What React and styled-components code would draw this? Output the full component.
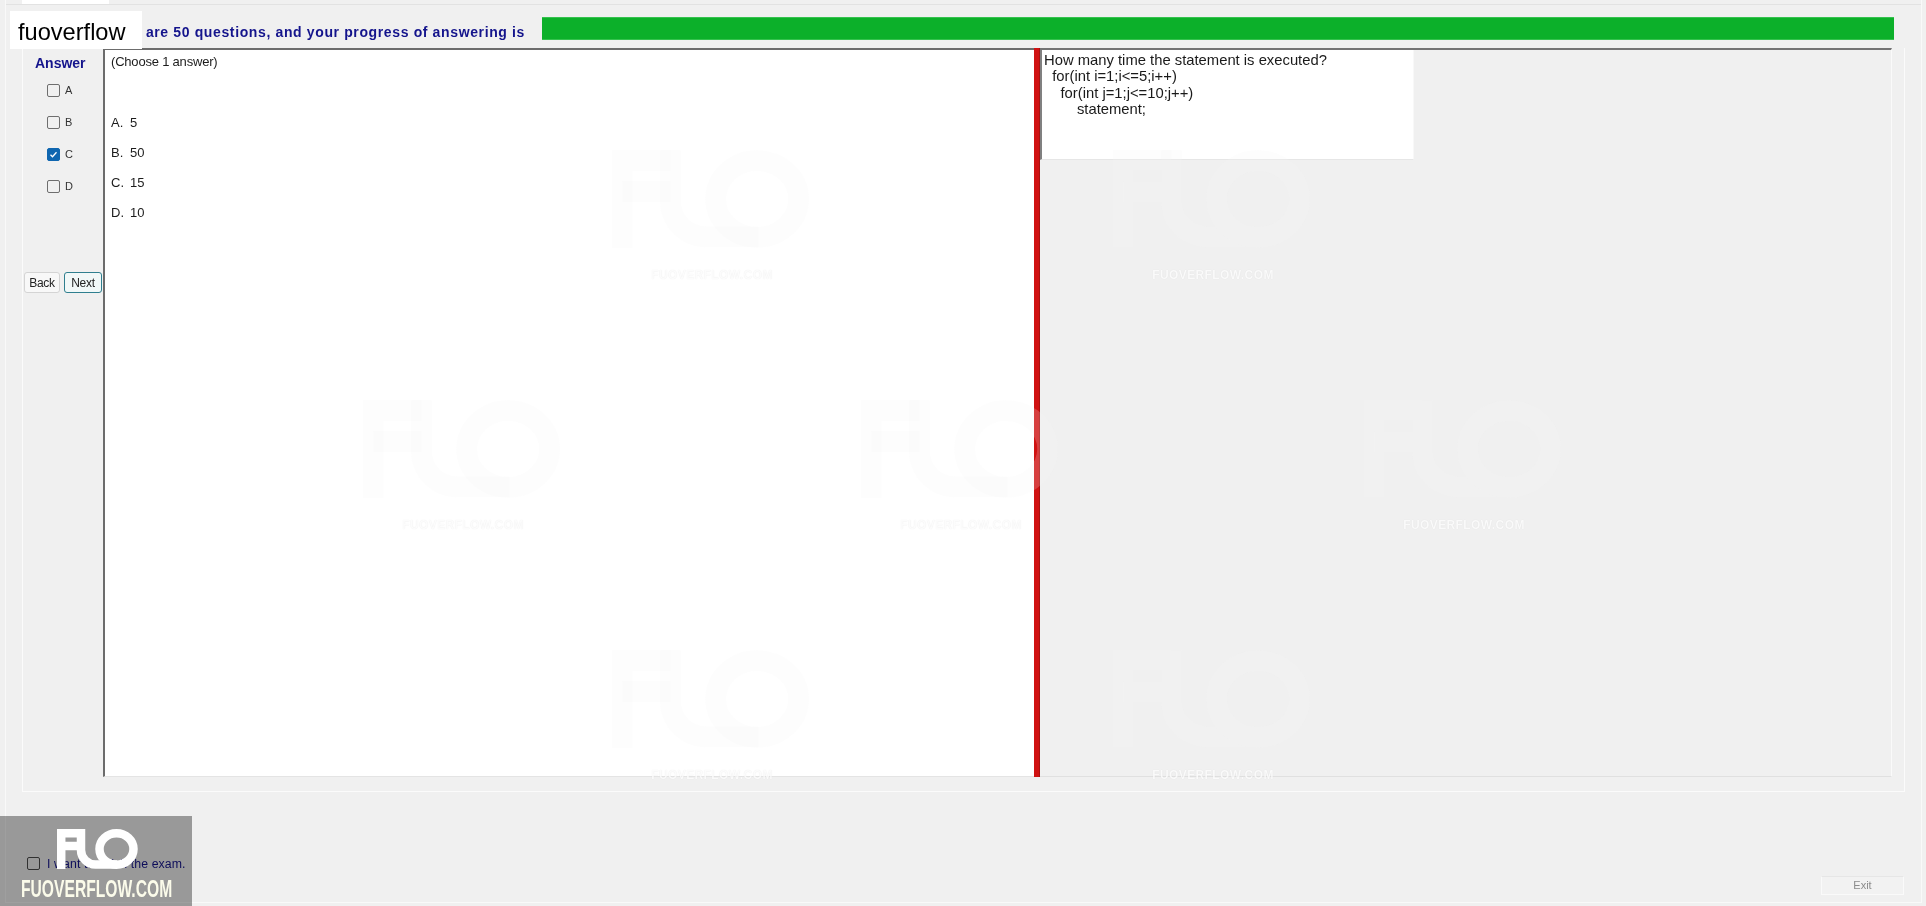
import React from "react";
import styled, { createGlobalStyle } from "styled-components";

const answers = [
  { key: "A", value: "5" },
  { key: "B", value: "50" },
  { key: "C", value: "15", checked: true },
  { key: "D", value: "10" },
];

const marks = [
  { x: 612, y: 150 },
  { x: 1113, y: 150 },
  { x: 363, y: 400 },
  { x: 861, y: 400 },
  { x: 1364, y: 400 },
  { x: 612, y: 650 },
  { x: 1113, y: 650 },
];

const question = `How many time the statement is executed?
  for(int i=1;i<=5;i++)
    for(int j=1;j<=10;j++)
        statement;`;

const FuoLogo = ({ color = "#fff", width = 82, height = 40 }) => (
  <svg width={width} height={height} viewBox="0 0 82 40" fill="none" stroke={color} strokeWidth="8.500">
    <path d="M4.200 40V4.200H24" />
    <path d="M4.200 17H24" />
    <path d="M24 0V21a14.500 14.500 0 0 0 14.500 14.500H60" />
    <ellipse cx="59.500" cy="20" rx="17" ry="15.700" />
  </svg>
);

const App = () => {
  return (
    <Page>
      <GlobalStyle />
      <Frame>
        <TabStrip>
          <Tab />
        </TabStrip>
        <ProgressRow>
          <ProgressText>are 50 questions, and your progress of answering is</ProgressText>
          <ProgressBar />
        </ProgressRow>
        <GroupBox>
          <AnswerColumn>
            <AnswerTitle>Answer</AnswerTitle>
            <CheckList>
              {answers.map((a) => (
                <CheckRow key={a.key}>
                  <CheckBox $checked={a.checked}>
                    {a.checked && (
                      <svg width="9" height="9" viewBox="0 0 9 9" fill="none" stroke="#fff" strokeWidth="1.300">
                        <path d="M1.500 4.700l2 2 4-4.500" />
                      </svg>
                    )}
                  </CheckBox>
                  <CheckLabel>{a.key}</CheckLabel>
                </CheckRow>
              ))}
            </CheckList>
            <NavRow>
              <NavButton>Back</NavButton>
              <NavButton $active>Next</NavButton>
            </NavRow>
          </AnswerColumn>
          <LeftPane>
            <Choose>(Choose 1 answer)</Choose>
            <OptionList>
              {answers.map((a) => (
                <Option key={a.key}>
                  <OptionKey>{a.key}.</OptionKey>
                  {a.value}
                </Option>
              ))}
            </OptionList>
          </LeftPane>
          <Splitter />
          <RightPane>
            <QuestionBox>{question}</QuestionBox>
          </RightPane>
        </GroupBox>
        <Footer>
          <FinishRow>
            <CheckBox $dim />
            <FinishText>I want to finish the exam.</FinishText>
          </FinishRow>
          <ExitButton>Exit</ExitButton>
        </Footer>
      </Frame>

      {marks.map((m, i) => (
        <Watermark key={i} $x={m.x} $y={m.y}>
          <FuoLogo color="rgba(247,247,247,.2)" width={200} height={98} />
          <WatermarkText>FUOVERFLOW.COM</WatermarkText>
        </Watermark>
      ))}

      <BrandTag>fuoverflow</BrandTag>
      <Badge>
        <BadgeLogo>
          <FuoLogo />
        </BadgeLogo>
        <BadgeText>FUOVERFLOW.COM</BadgeText>
      </Badge>
    </Page>
  );
};

export default App;

// style
const GlobalStyle = createGlobalStyle`
  * {
    box-sizing: border-box;
  }
  html, body {
    margin: 0;
    background: #f0f0f0;
    overflow: hidden;
  }
  body {
    font-family: "Liberation Sans", Arial, sans-serif;
    color: #1c1c1c;
  }
`;

const Page = styled.div`
  position: relative;
  width: 1926px;
  height: 906px;
  padding: 0 4px 3px 5px;
  overflow: hidden;
`;

const Frame = styled.div`
  height: 100%;
  display: flex;
  flex-direction: column;
  border-right: 1px solid #f9f9f9;
  border-bottom: 1px solid #f9f9f9;
  border-left: 1px solid #f9f9f9;
`;

const TabStrip = styled.div`
  height: 5px;
  flex: none;
  border-bottom: 1px solid #e2e2e2;
`;

const Tab = styled.div`
  width: 87px;
  height: 4px;
  margin-left: 16px;
  background: #fff;
`;

const ProgressRow = styled.div`
  height: 23px;
  margin: 12px 27px 0 0;
  flex: none;
  display: flex;
  align-items: center;
  justify-content: flex-end;
  gap: 17px;
`;

const ProgressText = styled.div`
  padding-top: 7px;
  font-size: 14px;
  font-weight: 700;
  letter-spacing: 0.63px;
  color: #14148c;
  white-space: nowrap;
`;

const ProgressBar = styled.div`
  width: 1352px;
  height: 23px;
  background: #0cb02a;
  border-top: 1px solid #35c24e;
  border-bottom: 1px solid #35c24e;
`;

const GroupBox = styled.div`
  height: 744px;
  margin: 8px 0 0 16px;
  width: 1883px;
  flex: none;
  display: flex;
  padding: 0 12px 14px 0;
  border-left: 1px solid #fbfbfb;
  border-right: 1px solid #fbfbfb;
  border-bottom: 1px solid #fbfbfb;
`;

const AnswerColumn = styled.div`
  width: 80px;
  flex: none;
  display: flex;
  flex-direction: column;
`;

const AnswerTitle = styled.div`
  margin: 7px 0 0 12px;
  font-size: 14px;
  font-weight: 700;
  line-height: 16px;
  color: #14148c;
`;

const CheckList = styled.div`
  margin: 13px 0 0 24px;
  display: flex;
  flex-direction: column;
  gap: 19px;
`;

const CheckRow = styled.div`
  height: 13px;
  display: flex;
  align-items: center;
  gap: 5px;
`;

const CheckBox = styled.span`
  width: 13px;
  height: 13px;
  flex: none;
  display: flex;
  align-items: center;
  justify-content: center;
  border-radius: 2px;
  border: 1px solid ${(p) => (p.$checked ? "#0f66b0" : p.$dim ? "#4c4c4c" : "#6e6e6e")};
  background: ${(p) => (p.$checked ? "#0f66b0" : "transparent")};
`;

const CheckLabel = styled.span`
  padding-bottom: 2px;
  font-size: 11px;
  color: #333;
`;

const NavRow = styled.div`
  margin: 79px 0 0 1px;
  display: flex;
  gap: 4px;
`;

const NavButton = styled.button`
  width: ${(p) => (p.$active ? "38px" : "36px")};
  height: 21px;
  padding: 0;
  font-family: inherit;
  font-size: 12px;
  letter-spacing: -0.3px;
  color: #222;
  background: ${(p) => (p.$active ? "#f1f8f8" : "#f8f8f8")};
  border-radius: 3px;
  border: 1px solid ${(p) => (p.$active ? "#2f7f8f" : "#d4d4d4")};
`;

const LeftPane = styled.div`
  width: 931px;
  flex: none;
  padding: 4px 0 0 6px;
  background: #fff;
  border-top: 2px solid #6c6c6c;
  border-left: 2px solid #6c6c6c;
  border-bottom: 1px solid #e4e4e4;
  font-size: 13px;
`;

const Choose = styled.div`
  line-height: 15px;
  letter-spacing: -0.2px;
`;

const OptionList = styled.div`
  margin-top: 46px;
  display: flex;
  flex-direction: column;
  gap: 15px;
`;

const Option = styled.div`
  line-height: 15px;
  display: flex;
`;

const OptionKey = styled.span`
  width: 19px;
`;

const Splitter = styled.div`
  width: 6px;
  flex: none;
  background: #d01212;
  border-right: 1px solid #a81010;
`;

const RightPane = styled.div`
  flex: 1;
  border-top: 2px solid #737373;
  border-right: 1px solid #fafafa;
  border-bottom: 1px solid #e0e0e0;
`;

const QuestionBox = styled.pre`
  width: 374px;
  height: 110px;
  margin: 0;
  padding: 2px 0 0 2px;
  font-family: inherit;
  font-size: 14.800px;
  line-height: 16.300px;
  color: #1a1a1a;
  background: #fff;
  border-left: 2px solid #808080;
  border-right: 1px solid #f8f8f8;
  border-bottom: 1px solid #e6e6e6;
`;

const Footer = styled.div`
  flex: 1;
  display: flex;
  justify-content: space-between;
  padding: 0 17px 7px 21px;
`;

const FinishRow = styled.label`
  margin-top: 65px;
  height: 13px;
  display: flex;
  align-items: center;
  gap: 7px;
`;

const FinishText = styled.span`
  font-size: 12.300px;
  letter-spacing: 0.1px;
  color: #14148c;
`;

const ExitButton = styled.button`
  align-self: flex-end;
  width: 83px;
  height: 19px;
  padding: 0 0 2px;
  font-family: inherit;
  font-size: 11px;
  color: #8c8c8c;
  background: #f2f2f2;
  border: 1px solid #fafafa;
  border-top-color: #e6e6e6;
`;

const Watermark = styled.div`
  position: absolute;
  left: ${(p) => p.$x}px;
  top: ${(p) => p.$y}px;
  width: 200px;
  display: flex;
  flex-direction: column;
  align-items: center;
  gap: 20px;
  pointer-events: none;
`;

const WatermarkText = styled.div`
  font-size: 12px;
  font-weight: 700;
  letter-spacing: 0.4px;
  color: rgba(255, 255, 255, 0.85);
  text-shadow: 0 0 1px rgba(0, 0, 0, 0.1);
`;

const BrandTag = styled.div`
  position: absolute;
  left: 10px;
  top: 11px;
  width: 132px;
  height: 38px;
  padding-left: 8px;
  font-size: 23.600px;
  line-height: 42px;
  color: #000;
  background: #fff;
`;

const Badge = styled.div`
  position: absolute;
  left: 0;
  top: 816px;
  width: 192px;
  height: 90px;
  &::before {
    content: "";
    position: absolute;
    inset: 0;
    background: #a3a3a3;
    mix-blend-mode: multiply;
  }
`;

const BadgeLogo = styled.div`
  position: absolute;
  left: 57px;
  top: 13px;
  line-height: 0;
`;

const BadgeText = styled.div`
  position: absolute;
  left: 21px;
  top: 60px;
  font-size: 23px;
  line-height: 26px;
  font-weight: 700;
  color: #fbfbea;
  white-space: nowrap;
  transform: scaleX(0.68);
  transform-origin: left center;
`;
